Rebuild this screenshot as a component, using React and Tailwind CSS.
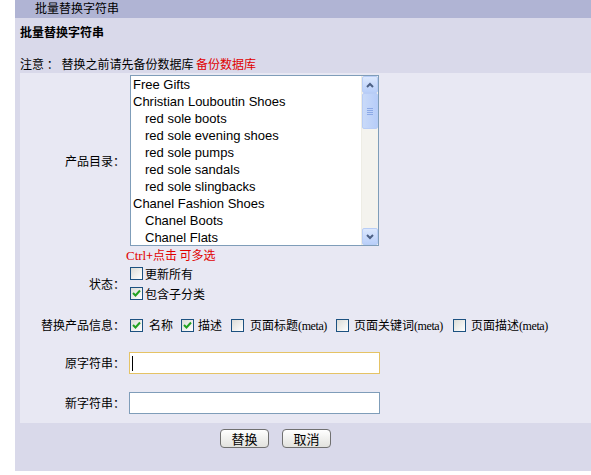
import React from "react";

const cjk = { fontFamily: '"Noto Sans CJK SC", "Liberation Sans", sans-serif' };
const lat = { fontFamily: '"Liberation Sans", "Noto Sans CJK SC", sans-serif' };
const ser = { fontFamily: '"Liberation Serif", serif' };

function Box({ checked }) {
  return (
    <span className="inline-flex w-[13px] h-[13px] border border-[#1c5180] bg-gradient-to-br from-[#dcdcd7] to-white items-center justify-center shrink-0">
      {checked && (
        <svg width="9" height="9" viewBox="0 0 9 9">
          <path d="M1 4 L3.5 6.5 L8 1.5" stroke="#21a121" strokeWidth="2" fill="none" />
        </svg>
      )}
    </span>
  );
}

const items = [
  ["Free Gifts", 0],
  ["Christian Louboutin Shoes", 0],
  ["red sole boots", 1],
  ["red sole evening shoes", 1],
  ["red sole pumps", 1],
  ["red sole sandals", 1],
  ["red sole slingbacks", 1],
  ["Chanel Fashion Shoes", 0],
  ["Chanel Boots", 1],
  ["Chanel Flats", 1],
];

function Btn({ children }) {
  return (
    <button
      className="w-[49px] h-[19px] rounded-[4px] border border-[#707070] bg-gradient-to-b from-white to-[#e2e2de] text-[13px] leading-[17px] text-black"
      style={cjk}
    >
      {children}
    </button>
  );
}

const Meta = () => <span className="text-[12px] tracking-[-0.4px]" style={ser}>(meta)</span>;

export default function App() {
  return (
    <div className="flex bg-white h-[475px] text-[12px] text-black" style={cjk}>
      <div className="w-[15px] shrink-0" />
      <div className="flex-1 flex flex-col">
        <div className="h-[18px] bg-[#b0b4d4] pl-[20px] leading-[16px] text-[12px]">批量替换字符串</div>
        <div className="bg-[#d9d9ea] h-[453px] flex flex-col">
          <div className="h-[55px] pl-[5px]">
            <div className="font-bold pt-[6px] leading-[16px] text-[12px]">批量替换字符串</div>
            <div className="mt-[16px] leading-[16px]">
              注意 ： 替换之前请先备份数据库 <span className="text-[#e00000]">备份数据库</span>
            </div>
          </div>
          <div className="ml-[5px] bg-[#e8e8f3] h-[350px] flex flex-col pt-[2px]">
            <div className="flex items-center">
              <div className="w-[106px] text-right pr-[1px]">产品目录：</div>
              <div className="ml-[4px] w-[249px] h-[171px] border border-[#7f9db9] bg-white flex" style={lat}>
                <div className="flex-1 pl-[2px] text-[13px] leading-[17px]">
                  {items.map(([t, ind]) => (
                    <div key={t} className={ind ? "pl-[12px]" : ""}>{t}</div>
                  ))}
                </div>
                <div className="w-[17px] flex flex-col bg-[#f4f3ee] border-l border-[#eeede5]">
                  <div className="h-[17px] rounded-[2px] border border-[#b8cdf6] bg-gradient-to-b from-[#dce8fd] to-[#b9cff9] flex items-center justify-center">
                    <svg width="8" height="6" viewBox="0 0 8 6"><path d="M1 5 L4 2 L7 5" stroke="#4d6185" strokeWidth="2" fill="none" /></svg>
                  </div>
                  <div className="h-[36px] rounded-[2px] border border-[#b8cdf6] bg-gradient-to-r from-[#c9daf8] to-[#b7cdf9] flex flex-col items-center justify-center gap-[1px]">
                    <div className="w-[6px] h-[1px] bg-[#8ca9e6]" />
                    <div className="w-[6px] h-[1px] bg-[#8ca9e6]" />
                    <div className="w-[6px] h-[1px] bg-[#8ca9e6]" />
                    <div className="w-[6px] h-[1px] bg-[#8ca9e6]" />
                  </div>
                  <div className="flex-1" />
                  <div className="h-[17px] rounded-[2px] border border-[#b8cdf6] bg-gradient-to-b from-[#dce8fd] to-[#b9cff9] flex items-center justify-center">
                    <svg width="8" height="6" viewBox="0 0 8 6"><path d="M1 1 L4 4 L7 1" stroke="#4d6185" strokeWidth="2" fill="none" /></svg>
                  </div>
                </div>
              </div>
            </div>
            <div className="pl-[106px] h-[17px] leading-[17px] text-[#e00000]">
              <span className="text-[13px]" style={ser}>Ctrl</span>+点击 可多选
            </div>
            <div className="flex items-center mt-[4px]">
              <div className="w-[106px] text-right pr-[1px]">状态：</div>
              <div className="ml-[4px] flex flex-col gap-[7px]">
                <div className="flex items-center gap-[2px] h-[13px]"><Box />更新所有</div>
                <div className="flex items-center gap-[2px] h-[13px]"><Box checked />包含子分类</div>
              </div>
            </div>
            <div className="flex items-center mt-[18px] h-[14px]">
              <div className="w-[106px] text-right pr-[1px]">替换产品信息：</div>
              <div className="ml-[4px] flex items-center">
                <Box checked /><span className="ml-[6px] mr-[8px]">名称</span>
                <Box checked /><span className="ml-[4px] mr-[9px]">描述</span>
                <Box /><span className="ml-[6px] mr-[9px]">页面标题<Meta /></span>
                <Box /><span className="ml-[5px] mr-[10px]">页面关键词<Meta /></span>
                <Box /><span className="ml-[5px]">页面描述<Meta /></span>
              </div>
            </div>
            <div className="flex items-center mt-[20px]">
              <div className="w-[106px] text-right pr-[1px]">原字符串：</div>
              <div className="ml-[3px] w-[251px] h-[22px] border border-[#e5c365] bg-white flex items-center pl-[2px]">
                <div className="w-[1px] h-[15px] bg-black" />
              </div>
            </div>
            <div className="flex items-center mt-[18px]">
              <div className="w-[106px] text-right pr-[1px]">新字符串：</div>
              <div className="ml-[3px] w-[251px] h-[22px] border border-[#7f9db9] bg-white" />
            </div>
          </div>
          <div className="flex pl-[205px] gap-[13px] pt-[6px]">
            <Btn>替换</Btn>
            <Btn>取消</Btn>
          </div>
        </div>
      </div>
    </div>
  );
}
